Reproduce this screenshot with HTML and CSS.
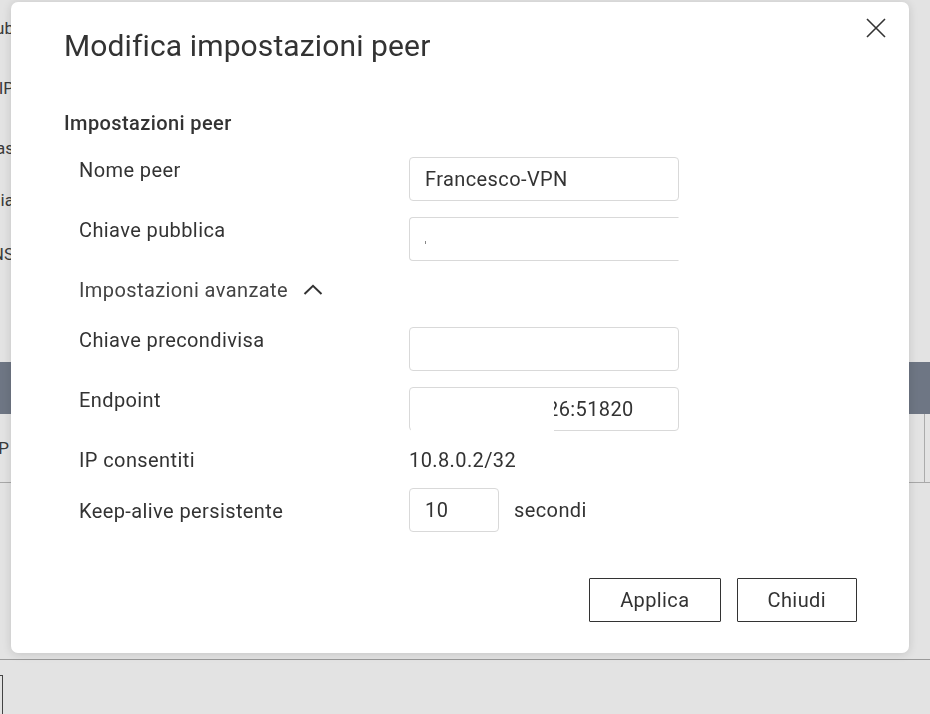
FILE: index.html
```html
<!DOCTYPE html>
<html lang="it">
<head>
<meta charset="utf-8">
<title>Modifica impostazioni peer</title>
<link rel="stylesheet" href="styles.css">
</head>
<body>
<div class="page">
  <div class="side-labels">
    <div class="sl sl-1">Pub</div>
    <div class="sl sl-2">VIP</div>
    <div class="sl sl-3">Bas</div>
    <div class="sl sl-4">Chia</div>
    <div class="sl sl-5">DNS</div>
  </div>
  <div class="table">
    <div class="thead"></div>
    <div class="trow">
      <div class="tcell"><span>VP</span></div>
      <div class="tsep"></div>
    </div>
  </div>
  <div class="footer"><div class="fbox"></div></div>
</div>

<div class="modal">
  <button class="close" aria-label="Chiudi">
    <svg width="20" height="20" viewBox="0 0 20 20"><path d="M1 1 L19 19 M19 1 L1 19" stroke="#333" stroke-width="1.6" fill="none"/></svg>
  </button>
  <h1 class="title">Modifica impostazioni peer</h1>
  <h2 class="section">Impostazioni peer</h2>
  <div class="form">
    <div class="row">
      <div class="label">Nome peer</div>
      <div class="field">Francesco-VPN</div>
    </div>
    <div class="row">
      <div class="label">Chiave pubblica</div>
      <div class="field field-cut"><span class="tick"></span></div>
    </div>
    <div class="row row-adv">
      <div class="label adv">Impostazioni avanzate
        <svg class="chev" width="20" height="11" viewBox="0 0 20 11"><path d="M1.5 10 L10 1.8 L18.5 10" stroke="#333" stroke-width="2" fill="none"/></svg>
      </div>
    </div>
    <div class="row">
      <div class="label">Chiave precondivisa</div>
      <div class="field"></div>
    </div>
    <div class="row">
      <div class="label">Endpoint</div>
      <div class="field field-endpoint">26:51820<span class="redact"></span></div>
    </div>
    <div class="row row-ip">
      <div class="label">IP consentiti</div>
      <div class="value">10.8.0.2/32</div>
    </div>
    <div class="row row-keep">
      <div class="label">Keep-alive persistente</div>
      <div class="field field-small">10</div>
      <div class="unit">secondi</div>
    </div>
  </div>
  <div class="actions">
    <button class="btn">Applica</button>
    <button class="btn">Chiudi</button>
  </div>
</div>
</body>
</html>
```
FILE: styles.css
```css
html, body {
  margin: 0;
  padding: 0;
}
body {
  width: 930px;
  height: 714px;
  overflow: hidden;
  background: #e3e3e3;
  font-family: Roboto, "Liberation Sans", sans-serif;
  color: #333;
}

/* dimmed page behind the dialog */
.page {
  display: flex;
  flex-direction: column;
}
.side-labels {
  width: 14px;
  overflow: hidden;
  padding-top: 18px;
  display: flex;
  flex-direction: column;
}
.sl {
  display: flex;
  justify-content: flex-end;
  white-space: nowrap;
  height: 20px;
  line-height: 20px;
  font-size: 17px;
  color: #3a3a3a;
}
.sl-2 { margin-top: 40px; }
.sl-3 { margin-top: 40px; }
.sl-4 { margin-top: 32px; }
.sl-5 { margin-top: 34px; }

.table {
  margin-top: 98px;
}
.thead {
  height: 52px;
  background: #6e7684;
}
.trow {
  height: 68px;
  border-bottom: 1px solid #a8a8a8;
  display: flex;
}
.tcell {
  width: 9px;
  overflow: hidden;
  display: flex;
  justify-content: flex-end;
  align-items: center;
  font-size: 17px;
  color: #3a3a3a;
  white-space: nowrap;
}
.tsep {
  margin-left: auto;
  margin-right: 5px;
  width: 1px;
  background: #ababab;
}
.footer {
  margin-top: 176px;
  border-top: 1px solid #9a9a9a;
}
.fbox {
  margin-top: 15px;
  margin-left: -50px;
  width: 51px;
  height: 60px;
  border: 1px solid #444;
}

/* dialog */
.modal {
  position: fixed;
  left: 11px;
  top: 2px;
  width: 898px;
  height: 651px;
  box-sizing: border-box;
  background: #fff;
  border-radius: 7px;
  box-shadow: 0 1px 10px rgba(0, 0, 0, 0.14);
  padding: 26px 52px 31px 53px;
  display: flex;
  flex-direction: column;
  letter-spacing: 0.4px;
}
.close {
  position: absolute;
  top: 16px;
  right: 23px;
  width: 20px;
  height: 20px;
  padding: 0;
  border: 0;
  background: transparent;
  display: flex;
}
.title {
  margin: 0;
  font-size: 30px;
  line-height: 36px;
  font-weight: 400;
  letter-spacing: 0.12px;
  color: #333;
}
.section {
  margin: 47px 0 0 0;
  font-size: 20px;
  line-height: 24px;
  font-weight: 500;
  color: #333;
}
.form {
  margin-top: 22px;
  padding-left: 15px;
  display: flex;
  flex-direction: column;
  gap: 16px;
}
.row {
  display: flex;
  align-items: flex-start;
}
.label {
  width: 330px;
  flex: none;
  padding-top: 1px;
  font-size: 20px;
  line-height: 24px;
  color: #333;
}
.field {
  position: relative;
  width: 270px;
  height: 44px;
  box-sizing: border-box;
  border: 1px solid #d9d9d9;
  border-radius: 4px;
  padding: 0 15px;
  display: flex;
  align-items: center;
  font-size: 20px;
  color: #333;
}
.field-cut {
  border-right-color: transparent;
  border-radius: 4px 0 0 4px;
}
.tick {
  width: 1px;
  height: 3px;
  background: #888;
  margin-top: 6px;
}
.field-endpoint {
  padding-left: 137px;
}
.field-endpoint .redact {
  position: absolute;
  top: 1px;
  left: 1px;
  width: 143px;
  height: 44px;
  background: #fff;
}
.row-adv {
  height: 34px;
}
.adv {
  width: auto;
  display: flex;
  align-items: center;
  gap: 15px;
  color: #444;
}
.chev {
  margin-top: -2px;
}
.row-ip {
  height: 25px;
}
.value {
  padding-top: 1px;
  font-size: 20px;
  line-height: 24px;
  color: #333;
}
.row-keep {
  align-items: center;
}
.field-small {
  width: 90px;
}
.unit {
  margin-left: 15px;
  font-size: 20px;
  color: #333;
}
.actions {
  margin-top: auto;
  display: flex;
  justify-content: flex-end;
  gap: 16px;
}
.btn {
  height: 44px;
  padding: 0 30px;
  border: 1px solid #333;
  border-radius: 1px;
  background: #fff;
  font-family: Roboto, "Liberation Sans", sans-serif;
  font-size: 20px;
  letter-spacing: 0.4px;
  color: #333;
}
```
